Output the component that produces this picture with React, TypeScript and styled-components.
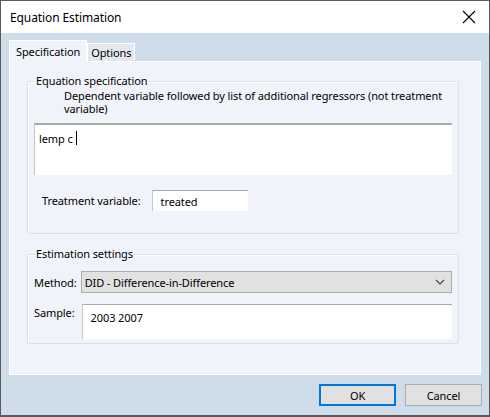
import React from "react";
import styled, { createGlobalStyle } from "styled-components";

const Global = createGlobalStyle`
  html, body { margin: 0; padding: 0; background: #ffffff; }
  body { font-family: "Noto Sans", "Open Sans", sans-serif; font-size: 11px; color: #000; }
  * { box-sizing: border-box; }
`;

const Window = styled.div`
  width: 490px;
  height: 417px;
  border: 1px solid #5a5a5a;
  border-bottom-width: 2px;
  display: flex;
  flex-direction: column;
  background: #cfdcea;
`;

const TitleBar = styled.div`
  height: 32px;
  background: #ffffff;
  display: flex;
  align-items: center;
  justify-content: space-between;
  padding: 0 0 0 9px;
  flex: none;
`;

const Title = styled.span`
  font-size: 12px;
  letter-spacing: -0.1px;
`;

const Close = styled.div`
  width: 46px;
  height: 32px;
  display: flex;
  align-items: center;
  justify-content: center;
  padding-left: 6px;
`;

const Body = styled.div`
  flex: 1;
  display: flex;
  flex-direction: column;
  padding: 7px 7px 0 8px;
`;

const Tabs = styled.div`
  display: flex;
  align-items: flex-end;
  height: 21px;
  position: relative;
  z-index: 1;
`;

const Tab = styled.div<{ $active?: boolean }>`
  height: ${(p) => (p.$active ? "22px" : "18px")};
  padding: 0 ${(p) => (p.$active ? "6px" : "3px")};
  background: ${(p) => (p.$active ? "#f0f4fa" : "#e3e8ef")};
  border: 1px solid #ffffff;
  border-bottom: none;
  display: flex;
  align-items: center;
  font-size: 11px;
  letter-spacing: -0.1px;
  margin-bottom: ${(p) => (p.$active ? "-1px" : "0")};
`;

const Panel = styled.div`
  height: 314px;
  background: #f0f3f9;
  border: 1px solid #ffffff;
  margin-right: 1px;
  padding: 12px 21px 0 17px;
  display: flex;
  flex-direction: column;
  gap: 13px;
`;

const Group = styled.fieldset<{ $h: number }>`
  margin: 0;
  height: ${(p) => p.$h}px;
  border: 1px solid #dce1e8;
  border-radius: 2px;
  padding: 0 6px 0 6px;
  box-shadow: inset 1px 1px 0 #ffffff;
`;

const Legend = styled.legend`
  padding: 0 1px;
  margin-left: 1px;
  font-size: 11px;
  letter-spacing: -0.1px;
  line-height: 14px;
`;

const Hint = styled.div`
  margin: 1px 0 0 30px;
  font-size: 11px;
  letter-spacing: -0.1px;
  line-height: 13px;
  white-space: nowrap;
`;

const HintLine = styled.div`
  height: 13px;
`;

const TextArea = styled.div`
  margin-top: 8px;
  height: 52px;
  background: #ffffff;
  border-top: 2px solid #a7a9ad;
  border-left: 1px solid #c4c6ca;
  padding: 6px 4px;
  font-size: 11px;
  letter-spacing: -0.1px;
  display: flex;
  align-items: flex-start;
`;

const Caret = styled.span`
  display: inline-block;
  width: 1px;
  height: 14px;
  background: #000;
  margin-left: 3px;
`;

const Row = styled.div<{ $mt: number; $gap: number; $align?: string }>`
  display: flex;
  align-items: ${(p) => p.$align ?? "center"};
  gap: ${(p) => p.$gap}px;
  margin-top: ${(p) => p.$mt}px;
`;

const Label = styled.span<{ $pl?: number; $pt?: number }>`
  font-size: 11px;
  letter-spacing: -0.1px;
  padding-left: ${(p) => p.$pl ?? 0}px;
  padding-top: ${(p) => p.$pt ?? 0}px;
  white-space: nowrap;
`;

const Field = styled.div<{ $w?: number; $h: number; $pt?: number }>`
  ${(p) => (p.$w ? `width: ${p.$w}px;` : "flex: 1;")}
  height: ${(p) => p.$h}px;
  background: #ffffff;
  border-top: 1px solid #a7a9ad;
  border-left: 1px solid #c4c6ca;
  padding: ${(p) => p.$pt ?? 0}px 7px 0 8px;
  font-size: 11px;
  letter-spacing: -0.1px;
  display: flex;
  align-items: ${(p) => (p.$pt ? "flex-start" : "center")};
`;

const Combo = styled.div`
  flex: 1;
  height: 22px;
  background: #e1e1e1;
  border: 1px solid #adadad;
  display: flex;
  align-items: center;
  justify-content: space-between;
  padding: 0 6px 0 3px;
  font-size: 11px;
  letter-spacing: -0.1px;
`;

const Footer = styled.div`
  flex: 1;
  display: flex;
  justify-content: flex-end;
  align-items: flex-start;
  gap: 9px;
  padding: 9px 0 0 0;
`;

const Button = styled.button<{ $primary?: boolean }>`
  width: 77px;
  height: 22px;
  background: #e1e1e1;
  border: ${(p) => (p.$primary ? "2px solid #0078d7" : "1px solid #adadad")};
  font-family: inherit;
  font-size: 11px;
  letter-spacing: -0.1px;
  color: #000;
  padding: 0;
`;

export default function App() {
  return (
    <>
      <Global />
      <Window>
        <TitleBar>
          <Title>Equation Estimation</Title>
          <Close>
            <svg width="14" height="14" viewBox="0 0 14 14">
              <path d="M1 1 L13 13 M13 1 L1 13" stroke="#000" strokeWidth="1.1" />
            </svg>
          </Close>
        </TitleBar>
        <Body>
          <Tabs>
            <Tab $active>Specification</Tab>
            <Tab>Options</Tab>
          </Tabs>
          <Panel>
            <Group $h={160}>
              <Legend>Equation specification</Legend>
              <Hint>
                <HintLine>Dependent variable followed by list of additional regressors (not treatment</HintLine>
                <HintLine>variable)</HintLine>
              </Hint>
              <TextArea>
                lemp c <Caret />
              </TextArea>
              <Row $mt={15} $gap={11}>
                <Label $pl={8}>Treatment variable:</Label>
                <Field $w={96} $h={21}>treated</Field>
              </Row>
            </Group>
            <Group $h={97}>
              <Legend>Estimation settings</Legend>
              <Row $mt={10} $gap={4}>
                <Label>Method:</Label>
                <Combo>
                  <span>DID - Difference-in-Difference</span>
                  <svg width="10" height="6" viewBox="0 0 10 6">
                    <path d="M1 1 L5 5 L9 1" stroke="#444" strokeWidth="1.1" fill="none" />
                  </svg>
                </Combo>
              </Row>
              <Row $mt={11} $gap={7} $align="flex-start">
                <Label $pt={1}>Sample:</Label>
                <Field $h={35} $pt={5}>2003 2007</Field>
              </Row>
            </Group>
          </Panel>
          <Footer>
            <Button $primary>OK</Button>
            <Button>Cancel</Button>
          </Footer>
        </Body>
      </Window>
    </>
  );
}
